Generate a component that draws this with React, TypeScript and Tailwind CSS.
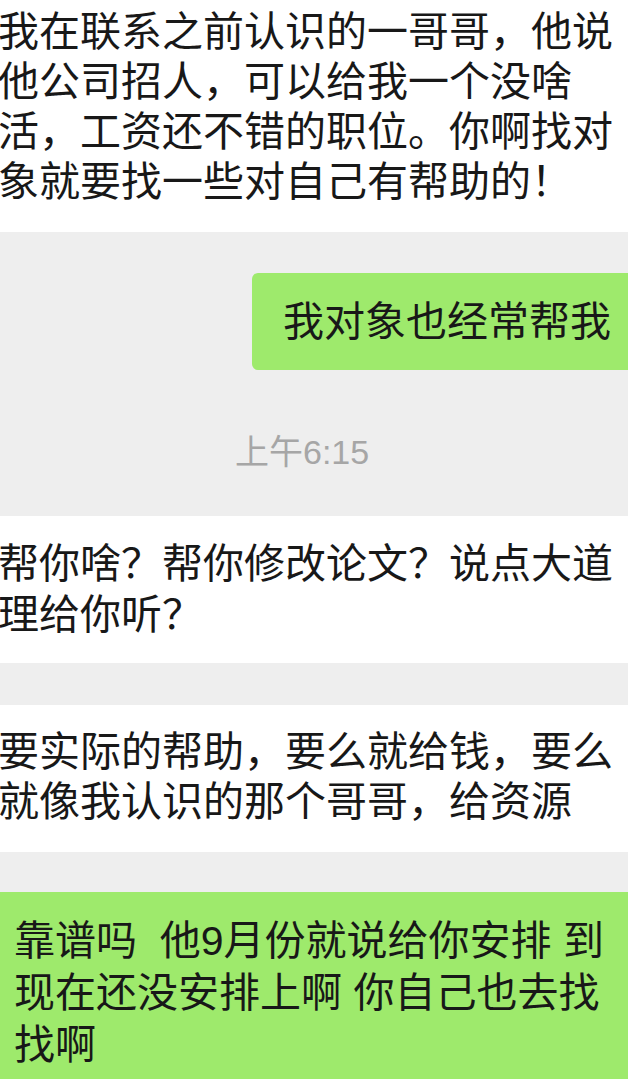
const font = { fontFamily: '"Liberation Sans", "Noto Sans CJK SC", sans-serif' };

const Lines = ({ lines }: { lines: string[] }) => (
  <>
    {lines.map((l) => (
      <div key={l} className="whitespace-pre">
        {l}
      </div>
    ))}
  </>
);

export default function App() {
  return (
    <div
      className="w-[628px] h-[1079px] overflow-hidden bg-[#eeeeee] flex flex-col text-[#181818] text-[41px] leading-[50px]"
      style={font}
    >
      <div className="h-[232px] shrink-0 bg-white pt-[7px] -ml-[2px]">
        <Lines
          lines={[
            "我在联系之前认识的一哥哥，他说",
            "他公司招人，可以给我一个没啥",
            "活，工资还不错的职位。你啊找对",
            "象就要找一些对自己有帮助的！",
          ]}
        />
      </div>

      <div className="h-[284px] shrink-0 flex flex-col">
        <div className="mt-[41px] ml-[252px] h-[97px] rounded-l-[6px] bg-[#9eea6c] flex items-center pl-[31px]">
          <span className="whitespace-nowrap">我对象也经常帮我</span>
        </div>
        <div className="mt-[63px] pl-[235px] text-[34px] leading-[38px] text-[#a6a6a6]">
          上午6:15
        </div>
      </div>

      <div className="h-[147px] shrink-0 bg-white pt-[23px] leading-[51px] -ml-[2px]">
        <Lines lines={["帮你啥？帮你修改论文？说点大道", "理给你听？"]} />
      </div>

      <div className="h-[42px] shrink-0" />

      <div className="h-[147px] shrink-0 bg-white pt-[22px] -ml-[2px]">
        <Lines lines={["要实际的帮助，要么就给钱，要么", "就像我认识的那个哥哥，给资源"]} />
      </div>

      <div className="h-[40px] shrink-0" />

      <div className="flex-1 bg-[#9eea6c] pt-[23px] pl-[14px] leading-[52px]">
        <Lines
          lines={[
            "靠谱吗  他9月份就说给你安排 到",
            "现在还没安排上啊 你自己也去找",
            "找啊",
          ]}
        />
      </div>
    </div>
  );
}
